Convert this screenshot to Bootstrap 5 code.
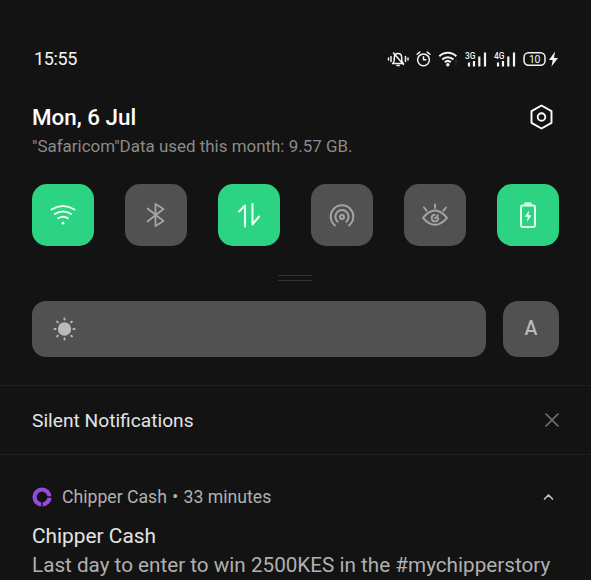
<!DOCTYPE html>
<html lang="en">
<head>
<meta charset="utf-8">
<meta name="viewport" content="width=device-width, initial-scale=1">
<title>Quick settings</title>
<link href="https://cdn.jsdelivr.net/npm/bootstrap@5.3.0/dist/css/bootstrap.min.css" rel="stylesheet">
<style>
body{background:#131313;color:#fff;font-family:Roboto,"Liberation Sans",sans-serif;height:580px;overflow:hidden}
svg{display:block;flex:none;fill:none;stroke:currentColor;stroke-linecap:round;stroke-linejoin:round}
svg text{fill:currentColor;stroke:none;font-family:Roboto,sans-serif}
.gutter{padding-left:32px;padding-right:32px}
.status{height:30px;margin-top:44px;color:#f2f2f2}
.clock{font-size:18px;letter-spacing:-.35px;padding-left:2px;margin-top:-1px}
.signals{gap:7px;margin-right:1px}
.bars{stroke-linecap:butt}
.heading{height:58px;margin-top:28px}
.date{font-size:22.4px;font-weight:500;line-height:30px}
.usage{font-size:16.95px;line-height:28px;color:#8b8b8b}
.gear{margin:2px 5px 0 0}
.tiles{margin-top:24px}
.tile{width:62px;height:62px;border-radius:15px;background:#515151;color:#a5a5a5;border:0;padding:0}
.tile.on{background:#2bd383;color:#e9fff3}
.handle{width:34px;height:6px;margin:29px 0 0 278px;border-top:1px solid #333;border-bottom:1px solid #333}
.sliders{margin-top:20px;height:56px;gap:17px}
.level{background:#515151;border-radius:14px;padding-left:20px;color:#bababa}
.auto{width:56px;border-radius:15px;background:#515151;color:#b8b8b8;font-size:19.5px;font-weight:500}
.silent{margin-top:28px;height:70px;border-top:1px solid #202020;border-bottom:1px solid #202020;font-size:19.200px;color:#e4e4e4}
.silent span{padding-top:2px}
.dismiss{color:#777}
.source{margin-top:27px;height:30px;font-size:17.650px;color:#b0b0b0;gap:10px}
.source-text{padding-top:1px}
.dot{margin:0 1px}
.collapse-mark{margin-right:5px;color:#c0c0c0}
.headline{font-size:20.850px;line-height:30px;margin-top:9px;color:#e4e4e4}
.message{font-size:20.680px;line-height:28px;color:#b0b0b0;white-space:nowrap}
</style>
<script src="https://cdn.jsdelivr.net/npm/bootstrap@5.3.0/dist/js/bootstrap.bundle.min.js" defer></script>
</head>
<body>
<header class="status gutter d-flex align-items-center justify-content-between">
  <span class="clock">15:55</span>
  <div class="signals d-flex align-items-center">
    <svg width="22" height="16" viewBox="0 0 22 16" stroke-width="1.500"><path d="M1.500 7v2M4 5.500v5M18.500 5.500v5M21 7v2M6 12.500h10.500c-1.300-1-1.800-2.200-1.800-4V6.800C14.700 4 13 2.600 11 2.600 9 2.600 7.300 4 7.300 6.800v1.700c0 1.800-.4 3-1.800 4M10 14.500h2.200M6.500 2l10 11.500"/></svg>
    <svg width="15" height="16" viewBox="-.5 0 15 16" stroke-width="1.500"><circle cx="7" cy="8.800" r="5.900"/><path d="M7 5.800v3h2.400M.6 3.300 3.200 1.100M13.400 3.300l-2.600-2.200"/></svg>
    <svg class="bars" width="20" height="16" viewBox="-1 0 20 16" stroke-width="2.100"><path d="M.3 5.300a12 12 0 0 1 17 0M3.200 8.500a8 8 0 0 1 11.200 0M5.800 11.300a4.500 4.500 0 0 1 6 0"/><circle cx="8.800" cy="13.700" r="1.700" fill="currentColor" stroke="none"/><path stroke="#444" stroke-width="1" d="M17 9v2M17 12v2"/></svg>
    <svg class="bars" width="22" height="17" viewBox="0 0 22 17" stroke-width="2.200"><text x="0" y="8.300" font-size="9.200" font-weight="500" textLength="10.500" lengthAdjust="spacingAndGlyphs">3G</text><path d="M4 15.500v-4M9 15.500V10M14.300 15.500V5.500M20 15.500V1.500"/></svg>
    <svg class="bars" width="22" height="17" viewBox="0 0 22 17" stroke-width="2.200"><text x="0" y="8.300" font-size="9.200" font-weight="500" textLength="10.500" lengthAdjust="spacingAndGlyphs">4G</text><path d="M4 15.500v-4M9 15.500V10M14.300 15.500V5.500M20 15.500V1.500"/></svg>
    <svg width="35" height="16" viewBox="0 0 35 16" stroke-width="1.500"><rect x="1" y="1.700" width="21" height="12.600" rx="4.500"/><text x="6" y="11.800" font-size="10.500" textLength="11.500">10</text><path fill="currentColor" stroke="none" d="m32 .5-6 8.500h3.700l-1.200 6.500L35 7h-4z"/></svg>
  </div>
</header>

<section class="heading gutter d-flex justify-content-between">
  <div><div class="date">Mon, 6 Jul</div><div class="usage">"Safaricom"Data used this month: 9.57 GB.</div></div>
  <svg class="gear" width="25" height="26" viewBox="0 0 25 26" stroke-width="1.900"><path d="m12.500 1.500 10 5.700v11.600l-10 5.700-10-5.700V7.200z"/><circle cx="12.500" cy="13" r="3.800"/></svg>
</section>

<section class="tiles gutter d-flex justify-content-between">
  <button class="tile on d-flex align-items-center justify-content-center" aria-label="Wi-Fi"><svg width="30" height="30" viewBox="0 0 30 30" stroke-width="2"><path d="M3.500 9.500q11.500-7 23 0M6.800 14q8.200-5.200 16.400 0M10.200 18.200q4.800-3 9.600 0"/><circle cx="15" cy="23" r="1.500" fill="currentColor" stroke="none"/></svg></button>
  <button class="tile d-flex align-items-center justify-content-center" aria-label="Bluetooth"><svg width="30" height="30" viewBox="0 0 30 30" stroke-width="1.800"><path d="m6.500 8.500 16 12.500-8 5V4l8 5L6.500 21.500"/></svg></button>
  <button class="tile on d-flex align-items-center justify-content-center" aria-label="Mobile data"><svg width="30" height="30" viewBox="0 0 30 30" stroke-width="2.100"><path d="m5 11.500 6-6v21M18.500 4v20.500l6.500-8"/></svg></button>
  <button class="tile d-flex align-items-center justify-content-center" aria-label="Hotspot"><svg width="30" height="30" viewBox="0 0 30 30" stroke-width="2"><path d="M8 25.500A11.300 11.300 0 1 1 22 25.500M10.700 21.700a6.600 6.600 0 1 1 8.600 0"/><circle cx="15" cy="17" r="2"/></svg></button>
  <button class="tile d-flex align-items-center justify-content-center" aria-label="Eye comfort"><svg width="30" height="30" viewBox="0 0 30 30" stroke-width="1.900"><path d="M3 17.800q12-14.500 24 0-12 14-24 0zM15 8V4.500M4 7.500l2.600 3.200M26 7.500l-2.600 3.200M14.500 14.800a3.300 3.300 0 1 0 3.800 3.500M15 18q2.200-.3 2.700-2.900"/></svg></button>
  <button class="tile on d-flex align-items-center justify-content-center" aria-label="Power saving"><svg width="30" height="30" viewBox="0 0 30 30" stroke-width="1.900"><rect x="8" y="5.500" width="14" height="21.500" rx="1.500"/><path d="M12.500 3.600h5" stroke-width="2.400"/><path fill="currentColor" stroke="none" d="m16 10.500-4.300 6.200h3l-.7 5 4.500-6.500h-3z"/></svg></button>
</section>

<div class="handle"></div>

<section class="sliders gutter d-flex">
  <div class="level flex-grow-1 d-flex align-items-center"><svg width="24" height="24" viewBox="0 0 24 24" stroke-width="2"><circle cx="12.500" cy="12" r="6.700" fill="currentColor" stroke="none"/><path d="M12.500 1.500v1M12.500 21.500v1M2.500 12h1M21.500 12h1M5.100 4.600l.7.700M19.200 18.700l.7.700M5.100 19.400l.7-.7M19.200 5.300l.7-.7"/></svg></div>
  <div class="auto d-flex align-items-center justify-content-center">A</div>
</section>

<section class="silent gutter d-flex align-items-center justify-content-between">
  <span>Silent Notifications</span>
  <svg class="dismiss" width="14" height="14" viewBox="0 0 14 14" stroke-width="1.500"><path d="m1 1 12 12M13 1 1 13"/></svg>
</section>

<article class="gutter">
  <div class="source d-flex align-items-center">
    <svg width="20" height="20" viewBox="0 0 20 20"><circle cx="10" cy="10" r="7.500" stroke="#964be0" stroke-width="4.200"/><path d="M10 14v6M14 10h6" stroke="#131313" stroke-width="1.300"/></svg>
    <span class="source-text flex-grow-1">Chipper Cash <span class="dot">•</span> 33 minutes</span>
    <svg class="collapse-mark" width="11" height="8" viewBox="0 0 11 8" stroke-width="1.700"><path d="m1.500 6 4-4 4 4"/></svg>
  </div>
  <div class="headline">Chipper Cash</div>
  <div class="message">Last day to enter to win 2500KES in the #mychipperstory</div>
</article>
</body>
</html>
